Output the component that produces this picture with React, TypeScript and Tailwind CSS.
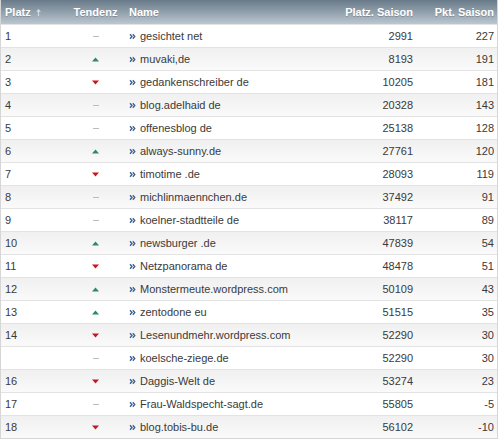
const rows: { platz: string; trend: 'up' | 'down' | 'same'; name: string; rank: number; pts: number }[] = [
  { platz: '1', trend: 'same', name: 'gesichtet net', rank: 2991, pts: 227 },
  { platz: '2', trend: 'up', name: 'muvaki,de', rank: 8193, pts: 191 },
  { platz: '3', trend: 'down', name: 'gedankenschreiber de', rank: 10205, pts: 181 },
  { platz: '4', trend: 'same', name: 'blog.adelhaid de', rank: 20328, pts: 143 },
  { platz: '5', trend: 'same', name: 'offenesblog de', rank: 25138, pts: 128 },
  { platz: '6', trend: 'up', name: 'always-sunny.de', rank: 27761, pts: 120 },
  { platz: '7', trend: 'down', name: 'timotime .de', rank: 28093, pts: 119 },
  { platz: '8', trend: 'same', name: 'michlinmaennchen.de', rank: 37492, pts: 91 },
  { platz: '9', trend: 'same', name: 'koelner-stadtteile de', rank: 38117, pts: 89 },
  { platz: '10', trend: 'up', name: 'newsburger .de', rank: 47839, pts: 54 },
  { platz: '11', trend: 'down', name: 'Netzpanorama de', rank: 48478, pts: 51 },
  { platz: '12', trend: 'up', name: 'Monstermeute.wordpress.com', rank: 50109, pts: 43 },
  { platz: '13', trend: 'up', name: 'zentodone eu', rank: 51515, pts: 35 },
  { platz: '14', trend: 'down', name: 'Lesenundmehr.wordpress.com', rank: 52290, pts: 30 },
  { platz: '', trend: 'same', name: 'koelsche-ziege.de', rank: 52290, pts: 30 },
  { platz: '16', trend: 'down', name: 'Daggis-Welt de', rank: 53274, pts: 23 },
  { platz: '17', trend: 'same', name: 'Frau-Waldspecht-sagt.de', rank: 55805, pts: -5 },
  { platz: '18', trend: 'down', name: 'blog.tobis-bu.de', rank: 56102, pts: -10 },
];

const cols = 'grid grid-cols-[62px_65px_1fr_116px_81px] items-center';

function Trend({ t }: { t: 'up' | 'down' | 'same' }) {
  if (t === 'up')
    return (
      <svg width="7" height="5" viewBox="0 0 7 5">
        <polygon points="3.5,0.5 7,4.5 0,4.5" fill="#2a8c5c" />
      </svg>
    );
  if (t === 'down')
    return (
      <svg width="7" height="5" viewBox="0 0 7 5">
        <polygon points="0,0.5 7,0.5 3.5,4.5" fill="#c8161d" />
      </svg>
    );
  return <span className="block w-[6px] h-px bg-[#bdbdbd]" />;
}

function Chevron() {
  return (
    <svg width="7" height="7" viewBox="0 0 7 7" className="shrink-0">
      <path d="M1 1.2 L3 3.5 L1 5.8 M3.8 1.2 L5.8 3.5 L3.8 5.8" stroke="#3b5d8c" strokeWidth="1.3" fill="none" />
    </svg>
  );
}

export default function App() {
  return (
    <div className="w-[500px] h-[443px] bg-white" style={{ fontFamily: '"Liberation Sans", Arial, sans-serif' }}>
      <div className="w-[498px] border-l border-r border-b border-[#d6d6d6]">
        <div className={`${cols} h-[24px] bg-gradient-to-b from-[#687a89] to-[#bcc7d0] text-white text-[11px] font-bold [text-shadow:0_1px_0_rgba(0,0,0,0.2)]`}>
          <div className="pl-[4px] flex items-center gap-[5px]">
            Platz
            <svg width="5" height="7" viewBox="0 0 5 7">
              <path d="M2.5 0 L5 2.8 L3.1 2.8 L3.1 7 L1.9 7 L1.9 2.8 L0 2.8 Z" fill="#d4dbe1" />
            </svg>
          </div>
          <div className="text-center">Tendenz</div>
          <div className="pl-[1px]">Name</div>
          <div className="text-right pr-[3px]">Platz. Saison</div>
          <div className="text-right pr-[3px]">Pkt. Saison</div>
        </div>
        {rows.map((r, i) => (
          <div
            key={i}
            className={`${cols} h-[23px] border-t border-[#e3e3e3] text-[11px] text-[#3a3a3a] ${
              i % 2 === 1 ? 'bg-gradient-to-b from-[#f0f0f0] to-[#fafafa]' : 'bg-white'
            }`}
          >
            <div className="pl-[4px]">{r.platz}</div>
            <div className="flex justify-center">
              <Trend t={r.trend} />
            </div>
            <div className="flex items-center gap-[4px] pl-[1px] whitespace-nowrap">
              <Chevron />
              {r.name}
            </div>
            <div className="text-right pr-[3px]">{r.rank}</div>
            <div className="text-right pr-[3px]">{r.pts}</div>
          </div>
        ))}
      </div>
    </div>
  );
}
